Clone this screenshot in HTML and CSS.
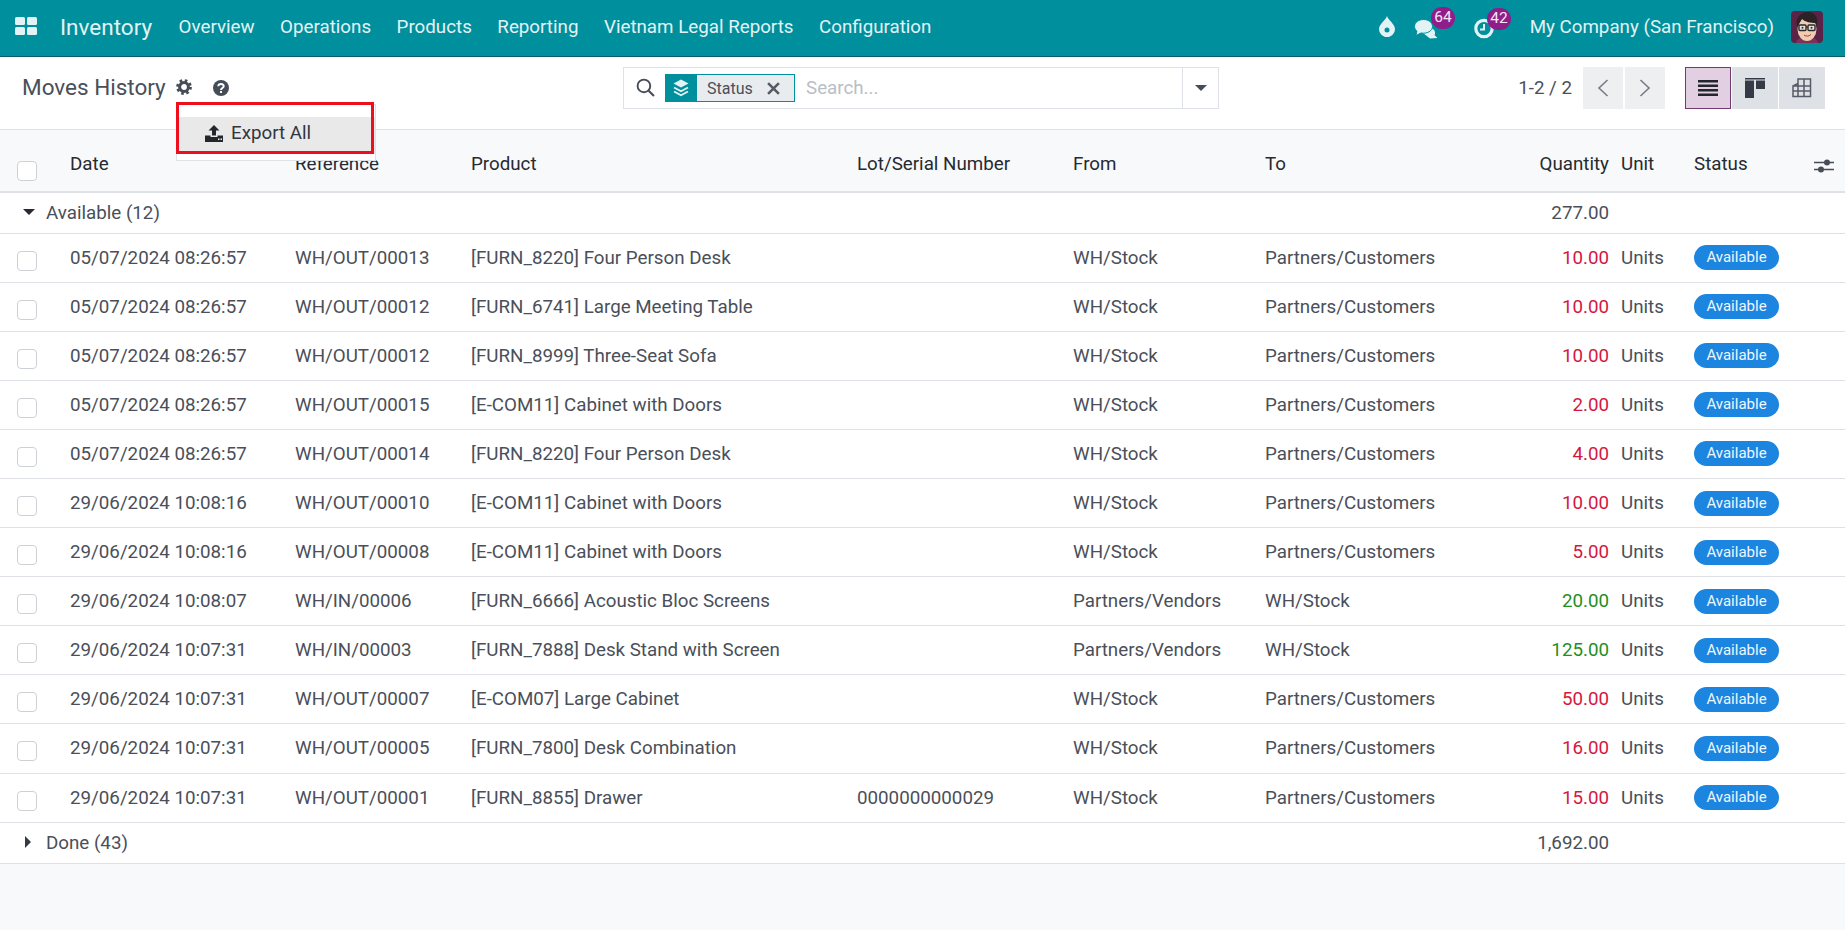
FILE: index.html
```html
<!DOCTYPE html>
<html lang="en">
<head>
  <meta charset="UTF-8">
  <title>Moves History</title>
  <link rel="stylesheet" href="styles.css">
</head>
<body>

<header class="navbar">
  <svg class="apps-icon" viewBox="0 0 22 18"><rect x="0" y="0" width="10" height="8" rx="1.5" fill="#e3f3f5"/><rect x="12" y="0" width="10" height="8" rx="1.5" fill="#e3f3f5"/><rect x="0" y="10" width="10" height="8" rx="1.5" fill="#e3f3f5"/><rect x="12" y="10" width="10" height="8" rx="1.5" fill="#e3f3f5"/></svg>
  <span class="brand">Inventory</span>
  <nav class="menu">
    <a>Overview</a>
    <a>Operations</a>
    <a>Products</a>
    <a>Reporting</a>
    <a>Vietnam Legal Reports</a>
    <a>Configuration</a>
  </nav>
  <div class="systray">
    <svg class="drop-icon" viewBox="0 0 16 21"><path d="M8 0C9.500 4.500 16 8 16 13.200A8 8 0 0 1 0 13.200C0 8 6.500 4.500 8 0Z" fill="#e3f3f5"/><circle cx="8" cy="14" r="2.500" fill="#008f9c"/></svg>
    <div class="tray-item chat">
      <svg class="chat-icon" viewBox="0 0 24 20"><path d="M16 19.500L23.500 19 20.500 16C22 14 21 9 15 9L9 14Z" fill="#e3f3f5"/><path d="M9.500 0.500C4.500 0.500 0.500 3.500 0.500 7.500C0.500 9.500 1.500 11 3 12.200L1.800 16.500L7 14C13 15 18.500 12 18.500 7.500C18.500 3.500 14.500 0.500 9.500 0.500Z" fill="#e3f3f5" stroke="#008f9c" stroke-width="1"/></svg>
      <span class="badge">64</span>
    </div>
    <div class="tray-item clock">
      <svg class="clock-icon" viewBox="0 0 20 20"><circle cx="10" cy="10" r="8.200" fill="none" stroke="#e3f3f5" stroke-width="3.200"/><path d="M10 5.500V11H6" fill="none" stroke="#e3f3f5" stroke-width="2"/></svg>
      <span class="badge">42</span>
    </div>
    <span class="company">My Company (San Francisco)</span>
    <svg class="avatar" viewBox="0 0 32 32">
      <rect width="32" height="32" rx="4" fill="#5b2348"/>
      <path d="M5 32C6 27 10 26 16 26C22 26 26 27 27 32Z" fill="#7c3158"/>
      <ellipse cx="16" cy="18" rx="9.500" ry="12" fill="#f3cbb0"/>
      <path d="M6 15C4 8 9 1 17 1C24 1 28 7 26 15L24.500 12C20 12 14 11 11 8C10 10 8 12 7.500 15Z" fill="#2a2226"/>
      <rect x="8" y="14" width="7" height="5.500" rx="1" fill="#e8e4de" stroke="#2a2a2a" stroke-width="1.400"/>
      <rect x="17" y="14" width="7" height="5.500" rx="1" fill="#e8e4de" stroke="#2a2a2a" stroke-width="1.400"/>
      <path d="M15 16H17" stroke="#2a2a2a" stroke-width="1"/>
      <circle cx="11.500" cy="16.800" r="1" fill="#2a2a2a"/>
      <circle cx="20.500" cy="16.800" r="1" fill="#2a2a2a"/>
      <path d="M13 24C15 25.500 18 25.500 20 23.500" fill="none" stroke="#8a4a3a" stroke-width="1"/>
    </svg>
  </div>
</header>

<section class="control-panel">
  <div class="panel-left">
    <span class="title">Moves History</span>
    <svg class="gear-icon" viewBox="0 0 16 16"><circle cx="8" cy="8" r="6.200" fill="none" stroke="#474d58" stroke-width="3.400" stroke-dasharray="2.430 2.440"/><circle cx="8" cy="8" r="4.400" fill="none" stroke="#474d58" stroke-width="3"/></svg>
    <svg class="help-icon" viewBox="0 0 16 16"><circle cx="8" cy="8" r="8" fill="#474d58"/><path d="M5.300 6.200C5.500 3.400 10.700 3.300 10.700 6.200C10.700 8 8 8 8 10" fill="none" stroke="#fff" stroke-width="2"/><rect x="7" y="11" width="2" height="2" fill="#fff"/></svg>
  </div>
  <div class="search-box">
    <svg class="search-icon" viewBox="0 0 18 18"><circle cx="7.500" cy="7.500" r="6" fill="none" stroke="#474d58" stroke-width="1.800"/><path d="M12 12L17 17" stroke="#474d58" stroke-width="2"/></svg>
    <div class="facet">
      <span class="facet-icon">
        <svg viewBox="0 0 16 18"><path d="M8 0.500L15.500 4.500L8 8.500L0.500 4.500Z" fill="#e3f3f5"/><path d="M1 8.500L8 12.300L15 8.500M1 12.500L8 16.300L15 12.500" fill="none" stroke="#e3f3f5" stroke-width="1.800"/></svg>
      </span>
      <span class="facet-value">Status</span>
      <svg class="facet-close" viewBox="0 0 12 12"><path d="M1 1L11 11M11 1L1 11" stroke="#555b66" stroke-width="2.400"/></svg>
    </div>
    <span class="placeholder">Search...</span>
    <span class="search-toggle"><span class="caret-down"></span></span>
  </div>
  <div class="panel-right">
    <span class="pager-value">1-2 / 2</span>
    <div class="pager-buttons">
      <button class="pager-btn"><svg viewBox="0 0 12 18"><path d="M10.500 1L2 9L10.500 17" fill="none" stroke="#777c85" stroke-width="1.600"/></svg></button>
      <button class="pager-btn"><svg viewBox="0 0 12 18"><path d="M1.500 1L10 9L1.500 17" fill="none" stroke="#777c85" stroke-width="1.600"/></svg></button>
    </div>
    <div class="view-buttons">
      <button class="view-btn active"><svg viewBox="0 0 20 20"><path d="M0 2H20V4.500H0ZM0 6.500H20V9H0ZM0 11H20V13.500H0ZM0 15.500H20V18H0Z" fill="#23262d"/></svg></button>
      <button class="view-btn"><svg viewBox="0 0 20 20"><path d="M0 0H20V1.500H0ZM0 2.500H9V20H0ZM11 2.500H20V11H11Z" fill="#343a46"/></svg></button>
      <button class="view-btn"><svg viewBox="0 0 20 20"><path d="M6 5.500V1H18.500V18.500H1V8H18.500M1 13H18.500M6 5.500V18.500M12 1V18.500M1 8L6 5.500" fill="none" stroke="#555b66" stroke-width="1.500"/></svg></button>
    </div>
  </div>
</section>

<div class="dropdown">
  <div class="dropdown-item">
    <svg class="export-icon" viewBox="0 0 18 17"><path d="M9 0L14.500 5.500H11V10.500H7V5.500H3.500Z" fill="#23262d"/><path d="M0 10.500H5.500V12H12.500V10.500H18V17H0Z" fill="#23262d"/><rect x="13" y="13.500" width="1.500" height="1.500" fill="#e9e9e9"/><rect x="15.500" y="13.500" width="1.500" height="1.500" fill="#e9e9e9"/></svg>
    Export All
  </div>
</div>
<div class="highlight"></div>

<table class="list">
  <colgroup>
    <col class="c-check"><col class="c-date"><col class="c-ref"><col class="c-product"><col class="c-lot"><col class="c-from"><col class="c-to"><col class="c-qty"><col class="c-unit"><col class="c-status"><col class="c-opt">
  </colgroup>
  <thead>
    <tr>
      <th><span class="check"></span></th>
      <th>Date</th>
      <th>Reference</th>
      <th>Product</th>
      <th>Lot/Serial Number</th>
      <th>From</th>
      <th>To</th>
      <th class="num">Quantity</th>
      <th class="unit">Unit</th>
      <th>Status</th>
      <th><svg class="options-icon" viewBox="0 0 20 16"><path d="M0 4.500H20M0 11.500H20" stroke="#474d58" stroke-width="1.500"/><circle cx="13" cy="4.500" r="3" fill="#474d58"/><circle cx="7" cy="11.500" r="3" fill="#474d58"/></svg></th>
    </tr>
  </thead>
  <tbody>
    <tr class="group">
      <td colspan="7"><span class="caret-down dark"></span>Available (12)</td>
      <td class="num">277.00</td>
      <td colspan="3"></td>
    </tr>
    <tr>
      <td><span class="check"></span></td><td>05/07/2024 08:26:57</td><td>WH/OUT/00013</td><td>[FURN_8220] Four Person Desk</td><td></td><td>WH/Stock</td><td>Partners/Customers</td><td class="num out">10.00</td><td class="unit">Units</td><td colspan="2"><span class="pill">Available</span></td>
    </tr>
    <tr>
      <td><span class="check"></span></td><td>05/07/2024 08:26:57</td><td>WH/OUT/00012</td><td>[FURN_6741] Large Meeting Table</td><td></td><td>WH/Stock</td><td>Partners/Customers</td><td class="num out">10.00</td><td class="unit">Units</td><td colspan="2"><span class="pill">Available</span></td>
    </tr>
    <tr>
      <td><span class="check"></span></td><td>05/07/2024 08:26:57</td><td>WH/OUT/00012</td><td>[FURN_8999] Three-Seat Sofa</td><td></td><td>WH/Stock</td><td>Partners/Customers</td><td class="num out">10.00</td><td class="unit">Units</td><td colspan="2"><span class="pill">Available</span></td>
    </tr>
    <tr>
      <td><span class="check"></span></td><td>05/07/2024 08:26:57</td><td>WH/OUT/00015</td><td>[E-COM11] Cabinet with Doors</td><td></td><td>WH/Stock</td><td>Partners/Customers</td><td class="num out">2.00</td><td class="unit">Units</td><td colspan="2"><span class="pill">Available</span></td>
    </tr>
    <tr>
      <td><span class="check"></span></td><td>05/07/2024 08:26:57</td><td>WH/OUT/00014</td><td>[FURN_8220] Four Person Desk</td><td></td><td>WH/Stock</td><td>Partners/Customers</td><td class="num out">4.00</td><td class="unit">Units</td><td colspan="2"><span class="pill">Available</span></td>
    </tr>
    <tr>
      <td><span class="check"></span></td><td>29/06/2024 10:08:16</td><td>WH/OUT/00010</td><td>[E-COM11] Cabinet with Doors</td><td></td><td>WH/Stock</td><td>Partners/Customers</td><td class="num out">10.00</td><td class="unit">Units</td><td colspan="2"><span class="pill">Available</span></td>
    </tr>
    <tr>
      <td><span class="check"></span></td><td>29/06/2024 10:08:16</td><td>WH/OUT/00008</td><td>[E-COM11] Cabinet with Doors</td><td></td><td>WH/Stock</td><td>Partners/Customers</td><td class="num out">5.00</td><td class="unit">Units</td><td colspan="2"><span class="pill">Available</span></td>
    </tr>
    <tr>
      <td><span class="check"></span></td><td>29/06/2024 10:08:07</td><td>WH/IN/00006</td><td>[FURN_6666] Acoustic Bloc Screens</td><td></td><td>Partners/Vendors</td><td>WH/Stock</td><td class="num in">20.00</td><td class="unit">Units</td><td colspan="2"><span class="pill">Available</span></td>
    </tr>
    <tr>
      <td><span class="check"></span></td><td>29/06/2024 10:07:31</td><td>WH/IN/00003</td><td>[FURN_7888] Desk Stand with Screen</td><td></td><td>Partners/Vendors</td><td>WH/Stock</td><td class="num in">125.00</td><td class="unit">Units</td><td colspan="2"><span class="pill">Available</span></td>
    </tr>
    <tr>
      <td><span class="check"></span></td><td>29/06/2024 10:07:31</td><td>WH/OUT/00007</td><td>[E-COM07] Large Cabinet</td><td></td><td>WH/Stock</td><td>Partners/Customers</td><td class="num out">50.00</td><td class="unit">Units</td><td colspan="2"><span class="pill">Available</span></td>
    </tr>
    <tr>
      <td><span class="check"></span></td><td>29/06/2024 10:07:31</td><td>WH/OUT/00005</td><td>[FURN_7800] Desk Combination</td><td></td><td>WH/Stock</td><td>Partners/Customers</td><td class="num out">16.00</td><td class="unit">Units</td><td colspan="2"><span class="pill">Available</span></td>
    </tr>
    <tr>
      <td><span class="check"></span></td><td>29/06/2024 10:07:31</td><td>WH/OUT/00001</td><td>[FURN_8855] Drawer</td><td>0000000000029</td><td>WH/Stock</td><td>Partners/Customers</td><td class="num out">15.00</td><td class="unit">Units</td><td colspan="2"><span class="pill">Available</span></td>
    </tr>
    <tr class="group done">
      <td colspan="7"><span class="caret-right"></span>Done (43)</td>
      <td class="num">1,692.00</td>
      <td colspan="3"></td>
    </tr>
  </tbody>
</table>

</body>
</html>
```

FILE: styles.css
```css
* {
  box-sizing: border-box;
}
body {
  margin: 0;
  height: 930px;
  overflow: hidden;
  position: relative;
  font-family: Roboto, sans-serif;
  font-size: 18.75px;
  color: #4a4f59;
  background: #f8f9fa;
}

/* top bar */
.navbar {
  display: flex;
  align-items: center;
  height: 57px;
  padding: 0 22px 2px 15px;
  background: #008f9c;
  border-bottom: 1px solid #0a5c66;
  color: #e3f3f5;
}
.apps-icon {
  width: 22px;
  height: 18px;
  margin-top: -3px;
}
.brand {
  margin-left: 23px;
  font-size: 22.500px;
}
.menu {
  display: flex;
  gap: 25.500px;
  margin-left: 26.500px;
}
.systray {
  display: flex;
  align-items: center;
  margin-left: auto;
}
.drop-icon {
  width: 16px;
  height: 21px;
  margin: -2px 19px 0 0;
}
.tray-item {
  position: relative;
  display: flex;
}
.chat-icon {
  width: 24px;
  height: 20px;
  margin-top: 4px;
}
.clock-icon {
  width: 20px;
  height: 21px;
  margin-top: 2px;
}
.chat {
  margin-right: 36px;
}
.clock {
  margin-right: 36px;
}
.badge {
  position: absolute;
  left: 17px;
  top: -8px;
  width: 24.500px;
  height: 22px;
  border-radius: 12px;
  background: #8f1d8a;
  color: #f4e6f2;
  font-size: 15.500px;
  line-height: 20px;
  text-align: center;
}
.clock .badge {
  left: 13px;
}
.company {
  margin-right: 17px;
}
.avatar {
  width: 32px;
  height: 32px;
}

/* control panel */
.control-panel {
  display: flex;
  align-items: flex-start;
  height: 73px;
  padding-top: 10px;
  background: #fff;
  border-bottom: 1px solid #dee2e6;
}
.panel-left {
  display: flex;
  align-items: center;
  width: 623px;
  height: 42px;
  padding-left: 22px;
}
.title {
  font-size: 22.500px;
  margin-top: -2px;
}
.gear-icon {
  width: 16px;
  height: 16px;
  margin: -3px 0 0 10px;
}
.help-icon {
  width: 16px;
  height: 16px;
  margin-left: 21px;
}
.search-box {
  display: flex;
  align-items: center;
  width: 596px;
  height: 42px;
  background: #fff;
  border: 1px solid #dee2e6;
}
.search-icon {
  width: 19px;
  height: 19px;
  margin: -2px 0 0 12px;
}
.facet {
  display: flex;
  align-items: center;
  width: 130px;
  height: 28px;
  margin-left: 10px;
  background: #e9ecef;
  border: 1px solid #008f9c;
}
.facet-icon {
  display: flex;
  align-items: center;
  justify-content: center;
  width: 32px;
  height: 28px;
  margin-left: -1px;
  background: #008f9c;
}
.facet-icon svg {
  width: 16px;
  height: 18px;
}
.facet-value {
  margin-left: 10px;
  font-size: 16px;
}
.facet-close {
  width: 13px;
  height: 13px;
  margin-left: 14px;
}
.placeholder {
  margin-left: 11px;
  color: #b9bec6;
}
.search-toggle {
  display: flex;
  align-items: center;
  justify-content: center;
  width: 36px;
  height: 100%;
  margin-left: auto;
  border-left: 1px solid #dee2e6;
}
.caret-down {
  display: inline-block;
  border-top: 6px solid #474d58;
  border-left: 6px solid transparent;
  border-right: 6px solid transparent;
}
.panel-right {
  display: flex;
  align-items: center;
  flex: 1;
  justify-content: flex-end;
  padding-right: 20px;
  height: 42px;
}
.pager-value {
  margin-right: 11px;
}
.pager-buttons, .view-buttons {
  display: flex;
}
.pager-buttons {
  gap: 2px;
  margin-right: 20px;
}
.view-buttons {
  gap: 1px;
}
button {
  display: flex;
  align-items: center;
  justify-content: center;
  height: 42px;
  padding: 0;
  border: 0;
}
.pager-btn {
  width: 40px;
  background: #eeeff1;
}
.pager-btn svg {
  width: 12px;
  height: 18px;
}
.view-btn {
  width: 46px;
  background: #dee2e6;
}
.view-btn.active {
  background: #e2cfe2;
  border: 1px solid #71396f;
}
.view-btn svg {
  width: 20px;
  height: 20px;
}

/* export dropdown and the red mark over it */
.dropdown {
  position: absolute;
  left: 176px;
  top: 104px;
  width: 200px;
  height: 57px;
  padding-top: 12px;
  background: #fff;
  border: 1px solid #dee2e6;
  z-index: 2;
}
.dropdown-item {
  display: flex;
  align-items: center;
  height: 37px;
  padding: 0 0 5px 28px;
  background: #e9e9e9;
  color: #32363e;
}
.export-icon {
  width: 18px;
  height: 17px;
  margin-right: 8px;
}
.highlight {
  position: absolute;
  left: 176px;
  top: 102px;
  width: 198px;
  height: 52px;
  border: 3px solid #ee0f1e;
  z-index: 3;
}

/* list */
.list {
  width: 1845px;
  table-layout: fixed;
  border-collapse: collapse;
  background: #fff;
}
.c-check { width: 70px; }
.c-date { width: 225px; }
.c-ref { width: 176px; }
.c-product { width: 386px; }
.c-lot { width: 216px; }
.c-from { width: 192px; }
.c-to { width: 220px; }
.c-qty { width: 124px; }
.c-unit { width: 85px; }
.c-status { width: 120px; }
.c-opt { width: 31px; }
.list th {
  height: 62px;
  padding: 7px 0 0;
  font-weight: 400;
  text-align: left;
  color: #262a31;
  background: #f8f9fa;
  border-bottom: 2px solid #dee2e6;
}
.list td {
  height: 49.100px;
  padding: 0;
  border-bottom: 1px solid #dee2e6;
}
.list th.num, .list td.num {
  text-align: right;
}
.list .unit {
  padding-left: 12px;
}
.list td:first-child, .list th:first-child {
  padding-left: 17px;
}
.check {
  display: block;
  width: 20px;
  height: 20px;
  margin-top: 6px;
  background: #fff;
  border: 1px solid #ced1d6;
  border-radius: 4px;
}
.list thead .check {
  margin-top: 13px;
}
.list tr.group td {
  height: 41px;
}
.group .caret-down {
  margin: 0 11px 3px 6px;
  border-top-color: #262a31;
  vertical-align: middle;
}
.caret-right {
  display: inline-block;
  margin: 0 15px 3px 8px;
  border-left: 6px solid #343a46;
  border-top: 6px solid transparent;
  border-bottom: 6px solid transparent;
  vertical-align: middle;
}
.out {
  color: #d5173f;
}
.in {
  color: #1f8f1f;
}
.pill {
  display: inline-block;
  width: 85px;
  height: 25px;
  border-radius: 13px;
  background: #1b85e0;
  color: #eef6fd;
  font-size: 15px;
  line-height: 25px;
  text-align: center;
}
.options-icon {
  display: block;
  width: 20px;
  height: 16px;
  margin-top: 4px;
}
```
